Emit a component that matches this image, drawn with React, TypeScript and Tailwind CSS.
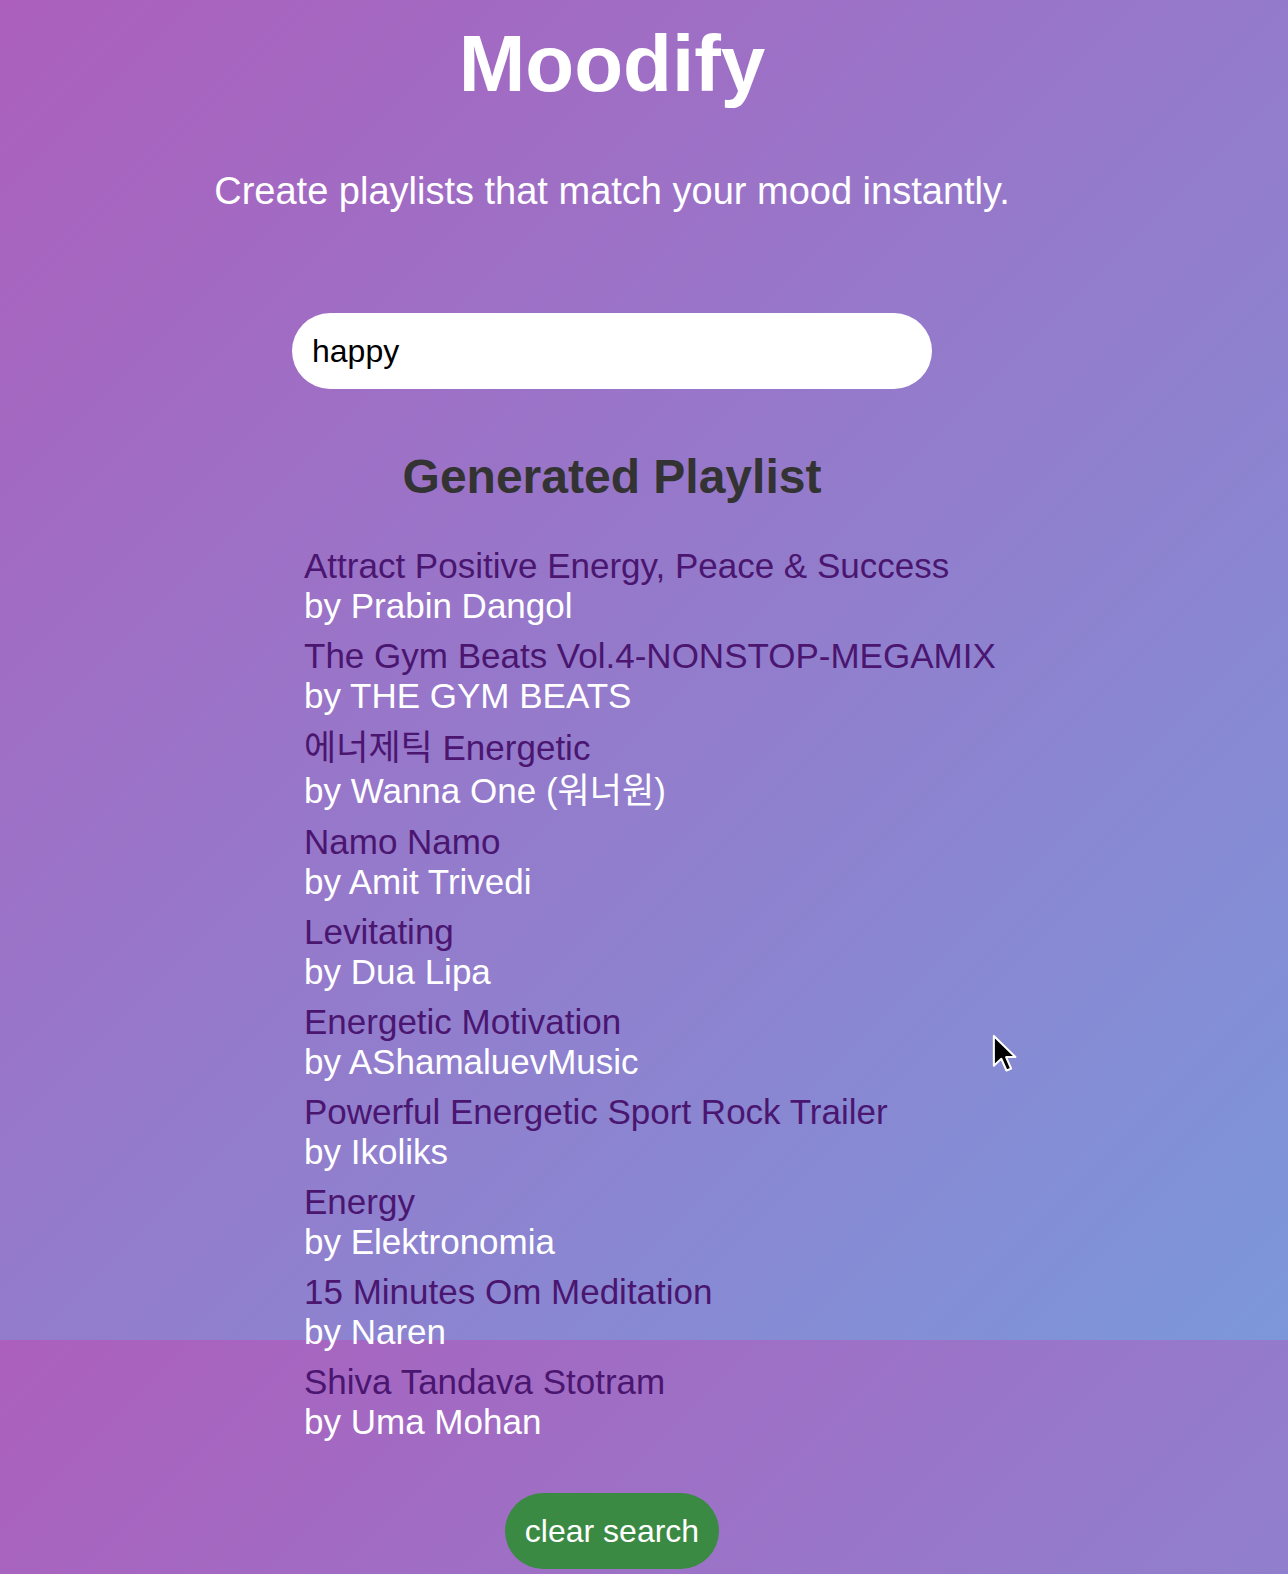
import React from 'react'

type Track = { title: string; artist: string; tall?: boolean }

const tracks: Track[] = [
  { title: 'Attract Positive Energy, Peace & Success', artist: 'Prabin Dangol' },
  { title: 'The Gym Beats Vol.4-NONSTOP-MEGAMIX', artist: 'THE GYM BEATS' },
  { title: '에너제틱 Energetic', artist: 'Wanna One (워너원)', tall: true },
  { title: 'Namo Namo', artist: 'Amit Trivedi' },
  { title: 'Levitating', artist: 'Dua Lipa' },
  { title: 'Energetic Motivation', artist: 'AShamaluevMusic' },
  { title: 'Powerful Energetic Sport Rock Trailer', artist: 'Ikoliks' },
  { title: 'Energy', artist: 'Elektronomia' },
  { title: '15 Minutes Om Meditation', artist: 'Naren' },
  { title: 'Shiva Tandava Stotram', artist: 'Uma Mohan' },
]

const TrackItem: React.FC<{ track: Track }> = ({ track }) => {
  const lineClass = track.tall ? 'block leading-[43px]' : 'block leading-[40px]'
  return (
    <li className="text-[35px]">
      <span className={`${lineClass} text-[#4a1670]`}>{track.title}</span>
      <span className={`${lineClass} text-white`}>by {track.artist}</span>
    </li>
  )
}

// screenshot pointer
const Cursor = () => (
  <svg
    className="pointer-events-none absolute left-[992px] top-[1034px]"
    width="26"
    height="41"
    viewBox="0 0 14 22"
  >
    <path
      d="M1 1 L1 17 L5 13.3 L7.8 19.6 L10.3 18.6 L7.6 12.4 L12.6 12.4 Z"
      fill="#000"
      stroke="#fff"
      strokeWidth="1.1"
      strokeLinejoin="round"
    />
  </svg>
)

export default function App() {
  return (
    <div
      className="relative min-h-screen bg-[linear-gradient(135deg,#ac5fbd,#7c97da)] bg-[length:100%_1340px] bg-repeat-y"
      style={{ fontFamily: '"Liberation Sans", Arial, "Noto Sans CJK KR", sans-serif' }}
    >
      <div className="flex w-[1224px] flex-col items-center">
        <h1 className="mt-[18px] text-[80px] font-bold leading-[92px] text-white">Moodify</h1>
        <p className="mt-[59px] text-[38px] leading-[44px] text-white">
          Create playlists that match your mood instantly.
        </p>

        <input
          className="mt-[100px] h-[76px] w-[640px] rounded-full bg-white px-5 text-[32px] text-black outline-none"
          defaultValue="happy"
          type="text"
        />

        <h2 className="mt-[60px] text-[48px] font-bold leading-[55px] text-[#333]">
          Generated Playlist
        </h2>

        <ul className="mt-[42px] flex w-[640px] flex-col gap-[10px] whitespace-nowrap pl-3">
          {tracks.map((t) => (
            <TrackItem key={t.title} track={t} />
          ))}
        </ul>

        <button className="mt-[51px] h-[76px] rounded-full bg-[#3b8a43] px-5 text-[32px] text-white">
          clear search
        </button>
      </div>

      <Cursor />
    </div>
  )
}
